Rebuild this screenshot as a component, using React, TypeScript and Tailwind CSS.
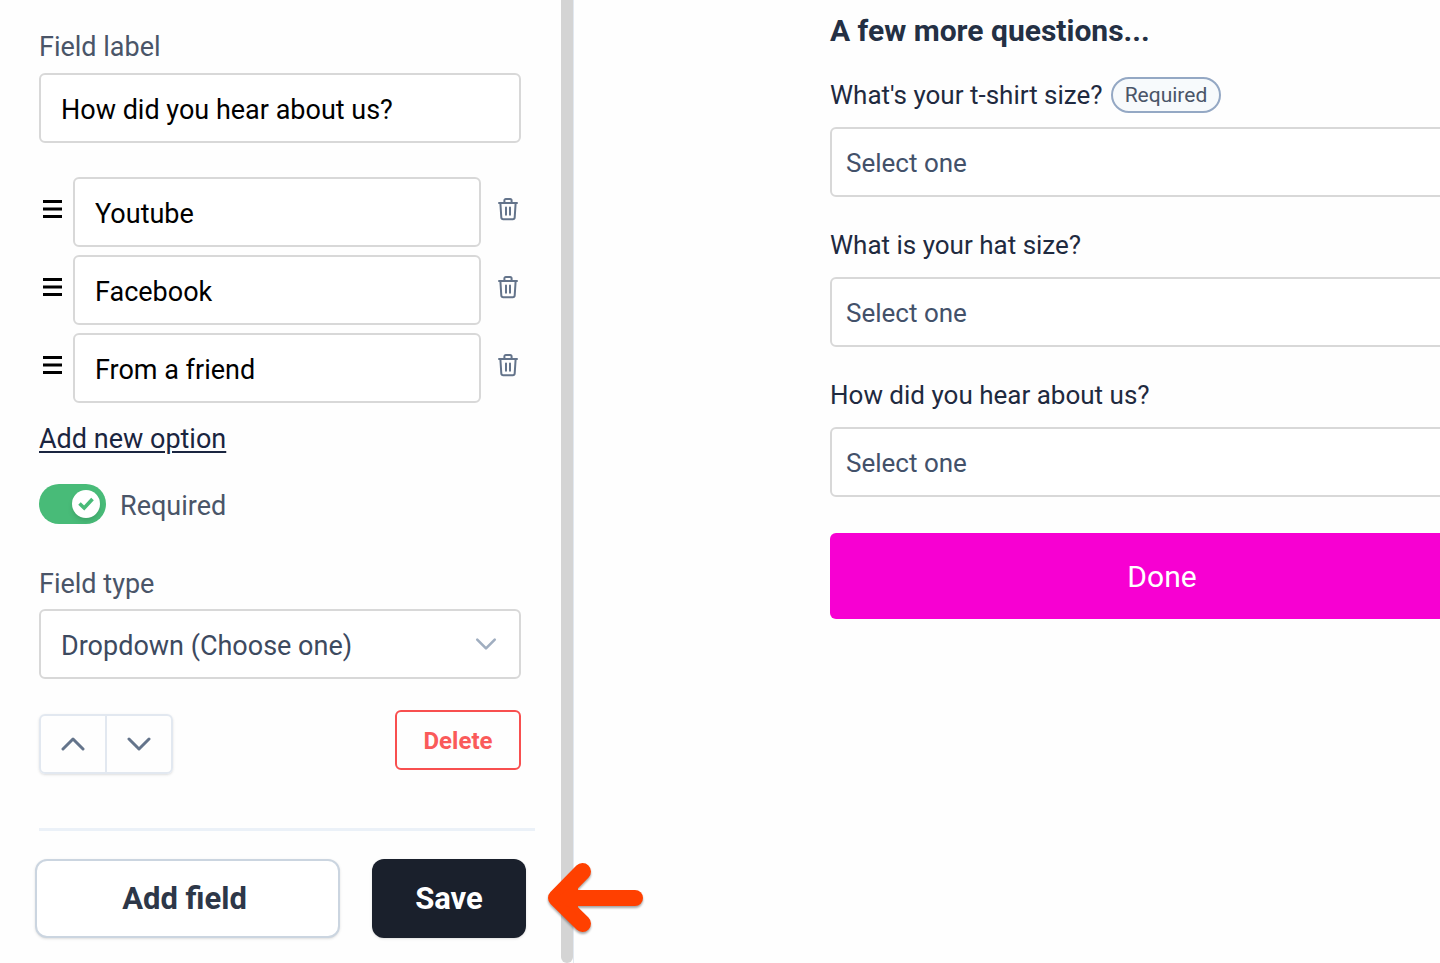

import { useState } from 'react'
import clsx from 'clsx'

const FIELD_BOX = 'h-[70px] w-full rounded-md border-2 border-[#d8d8d8] bg-white'

const PREVIEW_FIELDS = [
  { id: 'tshirt', label: "What's your t-shirt size?", required: true },
  { id: 'hat', label: 'What is your hat size?', required: false },
  { id: 'source', label: 'How did you hear about us?', required: false },
]

function DragHandle() {
  return (
    <svg width="19" height="18" viewBox="0 0 19 18" fill="none" stroke="#000" strokeWidth="2.8" aria-hidden="true">
      <path d="M0 1.5h19M0 9h19M0 16.5h19" />
    </svg>
  )
}

function TrashIcon() {
  return (
    <svg width="20" height="24" viewBox="0 0 20 24" fill="none" stroke="#64748b" strokeWidth="2" strokeLinecap="round" strokeLinejoin="round" aria-hidden="true">
      <path d="M1 6h18" />
      <path d="M6.4 6V3.6c0-1 .6-1.6 1.5-1.6h4.2c.9 0 1.5.6 1.5 1.6V6" />
      <path d="M2.4 6.4l.9 14c.1 1.2.8 1.8 1.9 1.8h9.6c1.1 0 1.8-.6 1.9-1.8l.9-14" />
      <path d="M8 10.4v7.4M12 10.4v7.4" />
    </svg>
  )
}

function Chevron({ up = false, className = 'h-4 w-6' }: { up?: boolean; className?: string }) {
  return (
    <svg viewBox="0 0 24 16" fill="none" stroke="currentColor" strokeWidth="3" strokeLinecap="round" strokeLinejoin="round" className={className} aria-hidden="true">
      <path d={up ? 'M2 13L12 3l10 10' : 'M2 3l10 10L22 3'} />
    </svg>
  )
}

function Pointer() {
  return (
    <svg
      width="96" height="70" viewBox="0 0 96 70" fill="none" stroke="#ff4000" strokeWidth="17" strokeLinecap="round" strokeLinejoin="round"
      className="pointer-events-none absolute top-1 left-full ml-[22px] drop-shadow-[0_2px_1px_rgba(0,0,0,0.35)]"
      aria-hidden="true"
    >
      <path d="M34.5 8.5L8.5 35l26 25.5" />
      <path d="M14 35h73" strokeWidth="16" />
      <path d="M9 35L30 18v34z" fill="#ff4000" stroke="none" />
    </svg>
  )
}

function Settings() {
  const [label, setLabel] = useState('How did you hear about us?')
  const [options, setOptions] = useState(['Youtube', 'Facebook', 'From a friend'])
  const [required, setRequired] = useState(true)

  return (
    <div className="min-w-0 flex-1 pt-[31px] pr-[26px] pl-[39px] text-[27px]">
      <div className="pr-[14px]">
        <label htmlFor="field-label" className="mb-[10px] block leading-8 text-[#4a5568]">Field label</label>
        <input
          id="field-label"
          value={label}
          onChange={e => setLabel(e.target.value)}
          className={clsx(FIELD_BOX, 'px-5 pt-1 text-black')}
        />

        <ul className="mt-[34px] flex flex-col gap-2">
          {options.map((option, i) => (
            <li key={i} className="flex items-center">
              <button type="button" aria-label="Reorder option" className="w-[34px] shrink-0 pb-1.5 pl-1">
                <DragHandle />
              </button>
              <input
                aria-label={`Option ${i + 1}`}
                value={option}
                onChange={e => setOptions(options.map((o, j) => (j === i ? e.target.value : o)))}
                className={clsx(FIELD_BOX, 'px-5 pt-1 text-black')}
              />
              <button
                type="button"
                aria-label="Delete option"
                onClick={() => setOptions(options.filter((_, j) => j !== i))}
                className="flex w-10 shrink-0 justify-end pr-[3px] pb-1.5"
              >
                <TrashIcon />
              </button>
            </li>
          ))}
        </ul>

        <button
          type="button"
          onClick={() => setOptions([...options, ''])}
          className="mt-5 block leading-8 text-[#1a2540] underline decoration-2 underline-offset-3"
        >
          Add new option
        </button>

        <label className="mt-[29px] flex w-fit items-center gap-[14px] leading-9 text-[#4a5568]">
          <span className="relative flex">
            <input
              type="checkbox"
              checked={required}
              onChange={e => setRequired(e.target.checked)}
              className="h-10 w-[67px] appearance-none rounded-full bg-[#cbd5e0] checked:bg-[#48bb78]"
            />
            <span
              className={clsx(
                'pointer-events-none absolute top-[6px] flex size-7 items-center justify-center rounded-full bg-white shadow-md',
                required ? 'right-[6px]' : 'left-[6px]',
              )}
            >
              {required && (
                <svg width="16" height="14" viewBox="0 0 16 14" fill="none" stroke="#48bb78" strokeWidth="3.6" aria-hidden="true">
                  <path d="M1.5 6.5l4.700 4.5L14.5 2" />
                </svg>
              )}
            </span>
          </span>
          <span className="pt-1">Required</span>
        </label>

        <label htmlFor="field-type" className="mt-11 mb-[9px] block leading-8 text-[#4a5568]">Field type</label>
        <div className="relative">
          <select id="field-type" className={clsx(FIELD_BOX, 'appearance-none px-5 pt-1 text-[#3d4a5f]')}>
            <option>Dropdown (Choose one)</option>
            <option>Short text</option>
          </select>
          <Chevron className="pointer-events-none absolute top-7 right-6 h-[14px] w-[22px] text-[#a0aec0]" />
        </div>

        <div className="mt-[31px] flex items-start justify-between">
          <div className="mt-1 flex h-[60px] divide-x-2 divide-[#e2e8f0] rounded-md border-2 border-[#e2e8f0] text-[#64748b] shadow-sm">
            <button type="button" aria-label="Move up" className="flex w-[66px] items-center justify-center">
              <Chevron up />
            </button>
            <button type="button" aria-label="Move down" className="flex w-16 items-center justify-center">
              <Chevron />
            </button>
          </div>
          <button type="button" className="h-[60px] w-[126px] rounded-md border-2 border-[#f84f4f] pt-0.5 text-2xl font-bold text-[#fa5a5a]">
            Delete
          </button>
        </div>
      </div>

      <hr className="mt-[54px] border-t-[3px] border-[#ebf1f8]" />

      <div className="-ml-1 mt-7 flex gap-8 pr-[9px] text-[31px] font-bold">
        <button type="button" className="h-[79px] flex-1 rounded-xl border-2 border-[#cbd5e0] bg-white pt-0.5 pr-1.5 text-[#2d3748] shadow-sm">
          Add field
        </button>
        <div className="relative">
          <button type="button" className="h-[79px] w-[154px] rounded-xl bg-[#1a202c] pt-0.5 text-white shadow-sm">
            Save
          </button>
          <Pointer />
        </div>
      </div>
    </div>
  )
}

function Preview() {
  return (
    <main className="min-w-0 flex-1 overflow-hidden pt-[11px] pl-64 text-[26px]">
      <div className="w-[664px]">
        <h2 className="text-[30px] leading-10 font-bold text-[#243044]">A few more questions...</h2>
        <div className="mt-6 flex flex-col gap-7">
          {PREVIEW_FIELDS.map(field => (
            <div key={field.id}>
              <div className="mb-3 flex h-10 items-center gap-2 text-[#1f2a40]">
                <label htmlFor={field.id}>{field.label}</label>
                {field.required && (
                  <span className="rounded-full border-2 border-[#94a8c4] bg-[#f7fafc] px-3 text-[21px] leading-8 text-[#4a5568]">
                    Required
                  </span>
                )}
              </div>
              <select id={field.id} className={clsx(FIELD_BOX, 'block appearance-none px-[14px] pt-0.5 text-[#43516a]')}>
                <option>Select one</option>
              </select>
            </div>
          ))}
        </div>
        <button type="button" className="mt-9 h-[86px] w-full rounded-md bg-[#f700d2] text-[30px] text-white">
          Done
        </button>
      </div>
    </main>
  )
}

export default function App() {
  return (
    <div className="flex min-h-screen bg-[#fefefe] font-[Roboto,sans-serif]">
      <aside className="flex w-[574px] shrink-0 border-r border-[#e2e8f0]">
        <Settings />
        <div className="w-3 rounded-b-full bg-[#d4d4d4]" />
      </aside>
      <Preview />
    </div>
  )
}
